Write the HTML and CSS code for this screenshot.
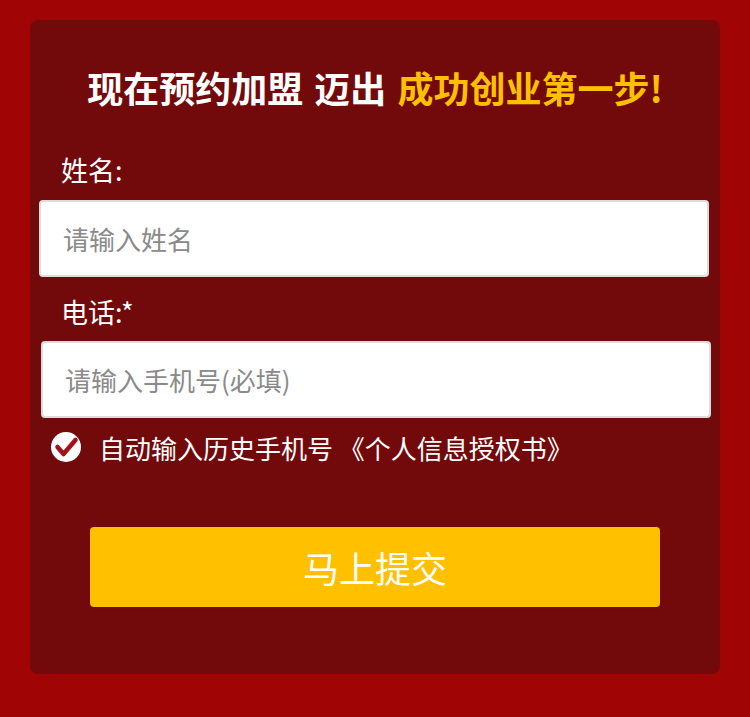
FILE: index.html
```html
<!DOCTYPE html>
<html lang="zh-CN">
<head>
  <meta charset="UTF-8" />
  <title>加盟预约</title>
  <link rel="stylesheet" href="styles.css">
</head>
<body>
  <div class="page">
    <!-- 预约表单 -->
    <form class="card" onsubmit="return false;">
      <h2 class="title">现在预约加盟 迈出 <span class="hl">成功创业第一步!</span></h2>

      <label class="label" for="name">姓名:</label>
      <input id="name" class="field field-name" type="text" placeholder="请输入姓名">

      <label class="label label-tel" for="tel">电话:*</label>
      <input id="tel" class="field field-tel" type="tel" placeholder="请输入手机号(必填)">

      <div class="agree">
        <svg class="agree-icon" viewBox="0 0 30 30">
          <circle cx="15" cy="15" r="15" fill="#fff"/>
          <path d="M6.5 15 L12.5 22 L24.5 8" fill="none" stroke="#a5101a" stroke-width="4.5" stroke-linecap="round" stroke-linejoin="round"/>
        </svg>
        <span>自动输入历史手机号 《个人信息授权书》</span>
      </div>

      <button class="submit" type="submit">马上提交</button>
    </form>
  </div>
</body>
</html>
```

FILE: styles.css
```css
html, body {margin:0; padding:0;}
body {
  background:#a10405; color:#fff;
  font-family:"Noto Sans CJK SC", "Noto Sans", sans-serif;
}

.page {padding:20px 30px 43px;}

/* カード */
.card {
  display:flex; flex-direction:column;
  background:#720a0b; border-radius:8px;
  padding:40px 0 67px;
}

.title {
  margin:0 0 36px; text-align:center;
  font-size:36px; line-height:54px; font-weight:700; color:#fff;
  word-spacing:3px;
}
.title .hl {color:#ffc000;}

.label {
  margin:0 0 10px 31px;
  font-size:27px; line-height:40px;
}
.label-tel {margin-top:15px; margin-bottom:9px;}

.field {
  box-sizing:border-box; height:77px;
  border:2px solid #dcdcdc; border-radius:4px; background:#fff;
  padding:0 22px; outline:none;
  font-family:inherit; font-size:26px; color:#333;
}
.field::placeholder {color:#8a8a8a;}
.field-name {margin:0 11px 0 9px;}
.field-tel {margin:0 9px 0 11px;}

/* 同意チェック */
.agree {
  display:flex; align-items:center; gap:18px;
  margin:9px 0 0 21px; height:40px;
  font-size:26px; color:#fff;
}
.agree-icon {width:30px; height:30px; flex:none;}

.submit {
  margin:60px 60px 0; height:80px;
  border:none; border-radius:4px; background:#ffc000; color:#fff;
  font-family:inherit; font-size:36px; cursor:pointer;
}
```
